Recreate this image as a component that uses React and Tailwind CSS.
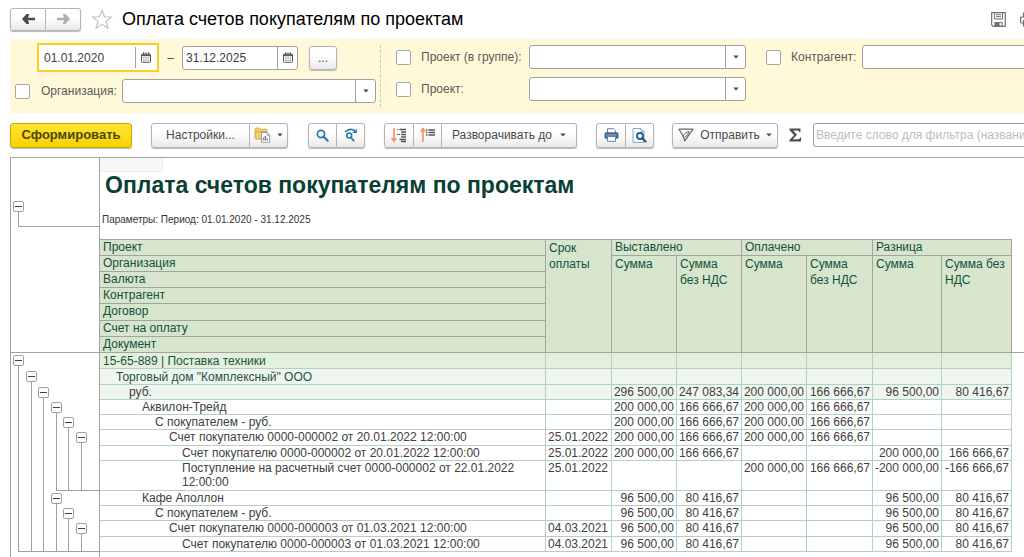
const BUTTON =
  "flex items-center justify-center border border-[#b4b4b4] bg-linear-to-b from-white from-40% to-[#e9e9e9] text-[#4a4a4a]";
const SHADOW = "rounded-[3px] shadow-[0_1px_1px_#b8b8b8]";

function Caret() {
  return (
    <svg width="6" height="4" viewBox="0 0 6 4" className="shrink-0" aria-hidden="true">
      <path d="M0.3 0.4h5.4L3 3.6z" fill="#4a4a4a" />
    </svg>
  );
}

function ArrowIcon({ right }) {
  return (
    <svg width="15" height="12" viewBox="0 0 15 12" aria-hidden="true">
      {right ? (
        <path d="M1 4.700h7L6.800 1H9.500L14 6l-4.500 5H6.800L8 7.300H1z" fill="#b0b0b0" />
      ) : (
        <path d="M14 4.700H7L8.200 1H5.500L1 6l4.500 5H8.200L7 7.300H14z" fill="#4a4a4a" />
      )}
    </svg>
  );
}

function StarIcon() {
  return (
    <svg width="22" height="21" viewBox="0 0 22 21" aria-hidden="true">
      <path
        d="M11 1.300l2.500 6.500 7 .2-5.500 4.400 1.900 6.900L11 15.400l-5.900 3.900L7 12.400 1.500 8l7-.2z"
        fill="#fff"
        stroke="#b9bec6"
        strokeWidth="1.100"
      />
    </svg>
  );
}

function CalendarIcon() {
  return (
    <svg width="10" height="11" viewBox="0 0 10 11" aria-hidden="true">
      <rect x="0.500" y="2" width="9" height="8.300" rx="0.800" fill="#fff" stroke="#555" />
      <path d="M1 2.500h8v1.700H1z" fill="#555" />
      <path d="M2.500 0.300v2M5 0.300v2M7.500 0.300v2" stroke="#555" />
      <path d="M2.200 6h5.800M2.200 8.200h5.800" stroke="#666" strokeDasharray="1.300 0.900" />
    </svg>
  );
}

function SaveIcon() {
  return (
    <svg width="15" height="15" viewBox="0 0 15 15" aria-hidden="true">
      <path d="M0.700 0.700h13.600v13.600H2.200L0.700 12.800z" fill="#fff" stroke="#707070" strokeWidth="1.200" />
      <path d="M3.500 1v6h8V1M5 2.700h5M5 4.700h5" fill="none" stroke="#707070" />
      <path d="M3.500 10h8v4h-8z" fill="#707070" />
      <path d="M8.500 11h2v2.500h-2z" fill="#fff" />
    </svg>
  );
}

function OutlinePrinterIcon() {
  return (
    <svg width="15" height="15" viewBox="0 0 15 15" aria-hidden="true">
      <path
        d="M3.500 5V1h8v4M3.500 11H1.600a1 1 0 0 1-1-1V6a1 1 0 0 1 1-1h11.800a1 1 0 0 1 1 1v4a1 1 0 0 1-1 1h-1.900M3.500 8.500h8V14h-8z"
        fill="none"
        stroke="#707070"
        strokeWidth="1.200"
      />
    </svg>
  );
}

function FolderReportIcon() {
  return (
    <svg width="17" height="16" viewBox="0 0 17 16" aria-hidden="true">
      <path d="M1 3.500C1 2 1.500 1 2.600 1H5.500l1 1.300H12q1 0 1 1V12H1.800Q1 12 1 11z" fill="#f3cf72" stroke="#cf9c3c" strokeWidth="0.900" />
      <path d="M1.400 4.800h11.400" stroke="#cf9c3c" strokeWidth="0.900" />
      <path d="M7.500 5.500h5.700l2.500 2.500v7.300H7.500z" fill="#fff" stroke="#8096ab" strokeWidth="0.900" />
      <path d="M13 5.700V8.300h2.500" fill="none" stroke="#8096ab" strokeWidth="0.800" />
      <path d="M9.500 10.500v3" stroke="#4caf6d" strokeWidth="1.300" />
      <path d="M11.300 9v4.500" stroke="#e2574c" strokeWidth="1.500" />
      <path d="M13.100 11.500v2" stroke="#4c7fb0" strokeWidth="1.300" />
    </svg>
  );
}

function FindIcon() {
  return (
    <svg width="13" height="13" viewBox="0 0 13 13" aria-hidden="true">
      <circle cx="5" cy="5" r="3.600" fill="none" stroke="#2a77ac" strokeWidth="1.700" />
      <path d="M7.700 7.700l4 4" stroke="#2a77ac" strokeWidth="2.200" strokeLinecap="round" />
    </svg>
  );
}

function FindNextIcon() {
  return (
    <svg width="14" height="14" viewBox="0 0 14 14" aria-hidden="true">
      <path d="M1.200 3.800Q6 -0.500 11 2.800" fill="none" stroke="#2a77ac" strokeWidth="1.700" />
      <path d="M12.900 0.700v4.400H8.400z" fill="#2a77ac" />
      <circle cx="5.200" cy="7.600" r="2.500" fill="none" stroke="#2a77ac" strokeWidth="1.500" />
      <path d="M7 9.500l2.700 3.200" stroke="#2a77ac" strokeWidth="1.800" strokeLinecap="round" />
    </svg>
  );
}

function ExpandIcon() {
  return (
    <svg width="16" height="16" viewBox="0 0 16 16" aria-hidden="true">
      <path d="M3 1v12" stroke="#f58b57" strokeWidth="1.600" />
      <path d="M0.700 11L3 14.300 5.300 11" fill="none" stroke="#f58b57" strokeWidth="1.400" />
      <path d="M6 2.500h1.500M6 7.500h3" stroke="#666" />
      <path d="M8.500 2.500H15M10 5H15M10 7.500H15M10 10H15M8.500 12.500H15M10 14.500H15" stroke="#555" strokeWidth="1.300" />
    </svg>
  );
}

function CollapseIcon() {
  return (
    <svg width="16" height="16" viewBox="0 0 16 16" aria-hidden="true">
      <path d="M3 15V2" stroke="#f58b57" strokeWidth="1.600" />
      <path d="M0.700 4.800L3 1.500 5.300 4.800" fill="none" stroke="#f58b57" strokeWidth="1.400" />
      <path d="M6 3h1.500M6 5.500h1.500M6 8h1.500M8.500 3H15M8.500 5.500H15M8.500 8H15" stroke="#555" strokeWidth="1.300" />
    </svg>
  );
}

function PrintIcon() {
  return (
    <svg width="15" height="14" viewBox="0 0 15 14" aria-hidden="true">
      <path d="M3.500 5V0.700h6l2 2V5" fill="#fff" stroke="#5b83a8" />
      <rect x="0.500" y="4.300" width="14" height="6.400" rx="1.500" fill="#44698f" />
      <path d="M2.500 7h10" stroke="#9fbad1" strokeWidth="0.900" />
      <path d="M3.500 8.500h8v4.800h-8z" fill="#fff" stroke="#5b83a8" />
    </svg>
  );
}

function PreviewIcon() {
  return (
    <svg width="15" height="15" viewBox="0 0 15 15" aria-hidden="true">
      <path d="M1 0.600h8l3 3v10.800H1z" fill="#fff" stroke="#8aa3b8" />
      <path d="M9 0.600v3h3" fill="none" stroke="#8aa3b8" />
      <circle cx="8" cy="8" r="3" fill="#fff" stroke="#1f5f92" strokeWidth="1.900" />
      <path d="M10.300 10.300l3.200 3.200" stroke="#1f5f92" strokeWidth="2.300" strokeLinecap="round" />
    </svg>
  );
}

function SendIcon() {
  return (
    <svg width="16" height="14" viewBox="0 0 16 14" aria-hidden="true">
      <path d="M1 1.200H15L6.800 12.800 5 8z" fill="none" stroke="#666" strokeWidth="1.200" strokeLinejoin="round" />
      <path d="M5 8Q6.500 4.500 11 3.200 10.500 7.500 6.300 9.500" fill="none" stroke="#666" strokeWidth="1" strokeLinejoin="round" />
    </svg>
  );
}

function SigmaIcon() {
  return (
    <svg width="13" height="14" viewBox="0 0 13 14" aria-hidden="true">
      <path d="M0.500 0.500H11.500V4H10.400Q10.200 2.500 8.700 2.500H4.200L8 6.700 3.700 11.300H9.200Q10.800 11.300 11.200 9.500H12.300L11.800 13.500H0.500V12L5 7.200 0.500 2z" fill="#4f4f4f" />
    </svg>
  );
}

function DateField({ label, value, focused }) {
  return (
    <div
      className={
        focused
          ? "flex h-[29px] w-[122px] border-2 border-[#fbcb2c] bg-white p-[2px]"
          : "flex h-6 w-[116px] rounded-[3px] border border-[#a0a0a0] bg-white"
      }
    >
      <input
        type="text"
        aria-label={label}
        defaultValue={value}
        className="min-w-0 flex-1 bg-transparent pl-[3px] text-[#3c3c3c] outline-none"
      />
      <button
        type="button"
        aria-label="Выбрать дату"
        className="flex w-[20px] items-center justify-center border-l border-[#a0a0a0]"
      >
        <CalendarIcon />
      </button>
    </div>
  );
}

function Combo({ id, className }) {
  return (
    <div className={"flex h-6 rounded-[3px] border border-[#a0a0a0] bg-white " + className}>
      <input id={id} type="text" className="min-w-0 flex-1 bg-transparent px-1 outline-none" />
      <button
        type="button"
        aria-label="Открыть список"
        className="flex w-[20px] items-center justify-center border-l border-[#a0a0a0]"
      >
        <Caret />
      </button>
    </div>
  );
}

function Check({ label }) {
  return (
    <input
      type="checkbox"
      aria-label={label}
      className="size-[15px] shrink-0 appearance-none rounded-[2px] border border-[#a6a6a6] bg-white checked:bg-[#fbcb2c]"
    />
  );
}

function Toggle() {
  return (
    <button
      type="button"
      aria-label="Свернуть группу"
      className="flex size-[11px] shrink-0 items-center justify-center rounded-[2px] border border-[#a0a0a0] bg-white"
    >
      <span className="h-px w-[7px] bg-[#444]" />
    </button>
  );
}

const INDENT = ["pl-[3px]", "pl-[16px]", "pl-[29px]", "pl-[42px]", "pl-[55px]", "pl-[69px]", "pl-[82px]"];

const INVOICE_2 = "Счет покупателю 0000-000002 от 20.01.2022 12:00:00";
const INVOICE_3 = "Счет покупателю 0000-000003 от 01.03.2021 12:00:00";

/* close: the tree level whose branch ends under the row */
const ROWS = [
  { level: 0, name: "15-65-889 | Поставка техники", height: "h-4", values: ["", "", "", "", "", "", ""] },
  { level: 1, name: 'Торговый дом "Комплексный" ООО', height: "h-4", values: ["", "", "", "", "", "", ""] },
  { level: 2, name: "руб.", height: "h-[15px]", values: ["", "296 500,00", "247 083,34", "200 000,00", "166 666,67", "96 500,00", "80 416,67"] },
  { level: 3, name: "Аквилон-Трейд", height: "h-[15px]", values: ["", "200 000,00", "166 666,67", "200 000,00", "166 666,67", "", ""] },
  { level: 4, name: "С покупателем - руб.", height: "h-[15px]", values: ["", "200 000,00", "166 666,67", "200 000,00", "166 666,67", "", ""] },
  { level: 5, name: INVOICE_2, height: "h-4", values: ["25.01.2022", "200 000,00", "166 666,67", "200 000,00", "166 666,67", "", ""] },
  { level: 6, name: INVOICE_2, height: "h-[15px]", values: ["25.01.2022", "200 000,00", "166 666,67", "", "", "200 000,00", "166 666,67"] },
  { level: 6, name: "Поступление на расчетный счет 0000-000002 от 22.01.2022 12:00:00", height: "h-[30px]", close: 3, values: ["25.01.2022", "", "", "200 000,00", "166 666,67", "-200 000,00", "-166 666,67"] },
  { level: 3, name: "Кафе Аполлон", height: "h-[15px]", values: ["", "96 500,00", "80 416,67", "", "", "96 500,00", "80 416,67"] },
  { level: 4, name: "С покупателем - руб.", height: "h-[15px]", values: ["", "96 500,00", "80 416,67", "", "", "96 500,00", "80 416,67"] },
  { level: 5, name: INVOICE_3, height: "h-4", values: ["04.03.2021", "96 500,00", "80 416,67", "", "", "96 500,00", "80 416,67"] },
  { level: 6, name: INVOICE_3, height: "h-[15px]", close: 0, values: ["04.03.2021", "96 500,00", "80 416,67", "", "", "96 500,00", "80 416,67"] },
];

const SLOT_WIDTH = ["w-[13px]", "w-3", "w-[13px]", "w-3", "w-[13px]", "w-3"];

function TreeCell({ row }) {
  return (
    <td className="border-r border-[#a3a3a3] p-0">
      <div className={"flex pl-px " + row.height}>
        {SLOT_WIDTH.map((width, slot) => {
          if (slot > row.level) return <span key={slot} className={"shrink-0 " + width} />;
          if (slot === row.level) {
            return (
              <span key={slot} className={"flex shrink-0 flex-col pt-[2px] pl-px " + width}>
                <Toggle />
                <span className="ml-[5px] w-px flex-1 bg-[#a0a0a0]" />
              </span>
            );
          }
          const under = row.close !== undefined && slot > row.close;
          const corner = row.close === slot;
          return (
            <span
              key={slot}
              className={"flex shrink-0 border-[#a0a0a0] pl-[6px] " + width + (under ? " border-b" : "")}
            >
              <span className={"flex-1 border-l border-[#a0a0a0]" + (corner ? " border-b" : "")} />
            </span>
          );
        })}
        <span className={row.close !== undefined ? "flex-1 border-b border-[#a0a0a0]" : "flex-1"} />
      </div>
    </td>
  );
}

const ROW_TONE = ["bg-[#e3f0dc] pt-px text-[#1d5240]", "bg-[#eff5ef] pt-px text-[#1d5240]", "bg-[#eff5ef] text-[#404040]"];
const CELL = "border-r border-b border-[#b3d0c5] pb-0 align-top leading-[14px]";
const HEAD = "border-r border-b border-[#a3a3a3] bg-[#d6e5cb] py-0 pl-[3px] text-left align-top font-normal text-[#14503f]";
const FIELDS = ["Организация", "Валюта", "Контрагент", "Договор", "Счет на оплату", "Документ"];
const SUMS = ["Сумма", "Сумма без НДС", "Сумма", "Сумма без НДС", "Сумма", "Сумма без НДС"];

function ReportTable() {
  return (
    <table className="w-full table-fixed border-separate border-spacing-0">
      <colgroup>
        <col className="w-[89px]" />
        <col />
        <col className="w-[66px]" />
        <col className="w-[65px]" />
        <col className="w-[65px]" />
        <col className="w-[65px]" />
        <col className="w-[66px]" />
        <col className="w-[69px]" />
        <col className="w-[70px]" />
        <col className="w-[12px]" />
      </colgroup>
      <thead>
        <tr className="h-[17px]">
          <td rowSpan={7} className="border-r border-b border-[#a3a3a3] p-0" />
          <th className={HEAD + " border-t leading-[15px]"}>Проект</th>
          <th rowSpan={7} className={HEAD + " border-t leading-4"}>Срок оплаты</th>
          <th colSpan={2} className={HEAD + " border-t leading-[15px]"}>Выставлено</th>
          <th colSpan={2} className={HEAD + " border-t leading-[15px]"}>Оплачено</th>
          <th colSpan={2} className={HEAD + " border-t leading-[15px]"}>Разница</th>
          <td rowSpan={7} className="border-b border-[#a3a3a3] p-0" />
        </tr>
        {FIELDS.map((field, i) => (
          <tr key={field} className={i === 3 ? "h-[17px]" : "h-4"}>
            <th className={HEAD + " leading-[15px]"}>{field}</th>
            {i === 0 &&
              SUMS.map((sum, n) => (
                <th key={n} rowSpan={6} className={HEAD + " pr-[4px] leading-4"}>
                  {sum}
                </th>
              ))}
          </tr>
        ))}
      </thead>
      <tbody>
        {ROWS.map((row, i) => (
          <tr key={i} className={row.height}>
            <TreeCell row={row} />
            <td className={CELL + " pr-[30px] " + INDENT[row.level] + " " + (ROW_TONE[row.level] || "pt-0 text-[#404040]")}>
              {row.name}
            </td>
            {row.values.map((value, n) => (
              <td
                key={n}
                className={
                  CELL +
                  (n === 0 ? " pl-[2px] text-left " : " pr-[2px] text-right ") +
                  " whitespace-nowrap " +
                  (ROW_TONE[row.level] || "pt-0 text-[#404040]")
                }
              >
                {value}
              </td>
            ))}
            <td className="p-0" />
          </tr>
        ))}
      </tbody>
    </table>
  );
}

export default function App() {
  return (
    <div className="flex min-h-screen flex-col overflow-hidden bg-white pl-[10px] font-['Liberation_Sans',Arial,sans-serif] text-[12px]">
      <header className="flex h-[39px] items-center pb-px">
        <div className={"flex " + SHADOW}>
          <button type="button" aria-label="Назад" className={BUTTON + " h-[23px] w-9 rounded-l-[3px]"}>
            <ArrowIcon />
          </button>
          <button type="button" aria-label="Вперед" className={BUTTON + " h-[23px] w-[35px] rounded-r-[3px] border-l-0"}>
            <ArrowIcon right />
          </button>
        </div>
        <button type="button" aria-label="В избранное" className="ml-[10px]">
          <StarIcon />
        </button>
        <h1 className="ml-[9px] text-[18px] leading-6 text-black">Оплата счетов покупателям по проектам</h1>
        <div className="-mr-[11px] ml-auto flex shrink-0 gap-[14px]">
          <button type="button" aria-label="Сохранить"><SaveIcon /></button>
          <button type="button" aria-label="Печать"><OutlinePrinterIcon /></button>
        </div>
      </header>

      <section className="flex h-[74px] bg-[#fff9d9] text-[#595959]">
        <div className="flex w-[366px] shrink-0 flex-col gap-[7px] pt-1">
          <div className="flex items-center pl-[27px]">
            <DateField label="Начало периода" value="01.01.2020" focused />
            <span className="w-[23px] text-center">–</span>
            <DateField label="Конец периода" value="31.12.2025" />
            <button type="button" aria-label="Выбрать период" className={BUTTON + " ml-[11px] h-6 w-[28px] " + SHADOW}>
              ...
            </button>
          </div>
          <div className="flex items-center pl-[5px]">
            <Check label="Отбор по организации" />
            <label htmlFor="organization" className="w-[92px] pl-[11px]">Организация:</label>
            <Combo id="organization" className="flex-1" />
          </div>
        </div>
        <div className="mx-1 my-[6px] border-l border-dashed border-[#cfcab8]" />
        <div className="flex w-[361px] shrink-0 flex-col gap-2 pt-[6px] pl-[11px]">
          <div className="flex items-center">
            <Check label="Отбор по проекту в группе" />
            <label htmlFor="project-group" className="w-[118px] pl-[10px]">Проект (в группе):</label>
            <Combo id="project-group" className="flex-1" />
          </div>
          <div className="flex items-center">
            <Check label="Отбор по проекту" />
            <label htmlFor="project" className="w-[118px] pl-[10px]">Проект:</label>
            <Combo id="project" className="flex-1" />
          </div>
        </div>
        <div className="-mr-6 flex flex-1 items-start pt-[6px] pl-[20px]">
          <div className="flex flex-1 items-center">
            <Check label="Отбор по контрагенту" />
            <label htmlFor="partner" className="w-[81px] pl-[10px]">Контрагент:</label>
            <Combo id="partner" className="flex-1" />
          </div>
        </div>
      </section>

      <div className="flex h-[44px] items-center">
        <button
          type="button"
          className="h-[25px] w-[122px] shrink-0 rounded-[3px] border border-[#c9a900] bg-linear-to-b from-[#ffe62e] to-[#f7d100] text-[13px] font-bold text-[#4d4600] shadow-[0_1px_1px_#b8b8b8]"
        >
          Сформировать
        </button>
        <div className={"ml-[19px] flex shrink-0 " + SHADOW}>
          <button type="button" className={BUTTON + " h-[25px] w-[99px] rounded-l-[3px]"}>Настройки...</button>
          <button type="button" aria-label="Варианты отчета" className={BUTTON + " h-[25px] w-[38px] gap-[6px] rounded-r-[3px] border-l-0"}>
            <FolderReportIcon />
            <Caret />
          </button>
        </div>
        <div className={"ml-5 flex shrink-0 " + SHADOW}>
          <button type="button" aria-label="Найти" className={BUTTON + " h-[25px] w-[29px] rounded-l-[3px]"}><FindIcon /></button>
          <button type="button" aria-label="Найти далее" className={BUTTON + " h-[25px] w-[28px] rounded-r-[3px] border-l-0"}><FindNextIcon /></button>
        </div>
        <div className={"ml-[19px] flex shrink-0 " + SHADOW}>
          <button type="button" aria-label="Развернуть группы" className={BUTTON + " h-[25px] w-[30px] rounded-l-[3px]"}><ExpandIcon /></button>
          <button type="button" aria-label="Свернуть группы" className={BUTTON + " h-[25px] w-[28px] border-l-0"}><CollapseIcon /></button>
          <button type="button" className={BUTTON + " h-[25px] w-[135px] gap-2 rounded-r-[3px] border-l-0"}>
            Разворачивать до
            <Caret />
          </button>
        </div>
        <div className={"ml-[19px] flex shrink-0 " + SHADOW}>
          <button type="button" aria-label="Печать отчета" className={BUTTON + " h-[25px] w-[30px] rounded-l-[3px]"}><PrintIcon /></button>
          <button type="button" aria-label="Предварительный просмотр" className={BUTTON + " h-[25px] w-[28px] rounded-r-[3px] border-l-0"}><PreviewIcon /></button>
        </div>
        <button type="button" className={BUTTON + " ml-[18px] h-[25px] w-[106px] shrink-0 gap-[6px] " + SHADOW}>
          <SendIcon />
          Отправить
          <Caret />
        </button>
        <button type="button" aria-label="Сумма выделенных ячеек" className="ml-[11px] shrink-0"><SigmaIcon /></button>
        <input
          type="text"
          aria-label="Фильтр"
          placeholder="Введите слово для фильтра (название товара, покупателя и пр.)"
          className="-mr-6 ml-[11px] h-6 min-w-0 flex-1 rounded-[3px] border border-[#a0a0a0] bg-white px-[2px] outline-none placeholder:text-[#bdbdbd]"
        />
      </div>

      <main className="flex flex-1 flex-col border-t border-l border-[#a3a3a3]">
        <div className="flex h-[81px]">
          <div className="w-[89px] shrink-0 border-r border-[#a3a3a3] pt-[43px] pl-[2px]">
            <Toggle />
            <div className="ml-[5px] h-[15px] border-b border-l border-[#a0a0a0]" />
          </div>
          <div>
            <div className="h-[14px] w-[63px] border-r border-b border-[#ececec] bg-[#f7f7f7]" />
            <h2 className="pl-[5px] text-[23px] leading-[26px] font-bold text-[#0a4033]">
              Оплата счетов покупателям по проектам
            </h2>
            <p className="pt-4 pl-[2px] text-[10px] leading-3 text-[#333]">
              Параметры: Период: 01.01.2020 - 31.12.2025
            </p>
          </div>
        </div>
        <ReportTable />
        <div className="w-[89px] flex-1 border-r border-[#a3a3a3]" />
      </main>
    </div>
  );
}
